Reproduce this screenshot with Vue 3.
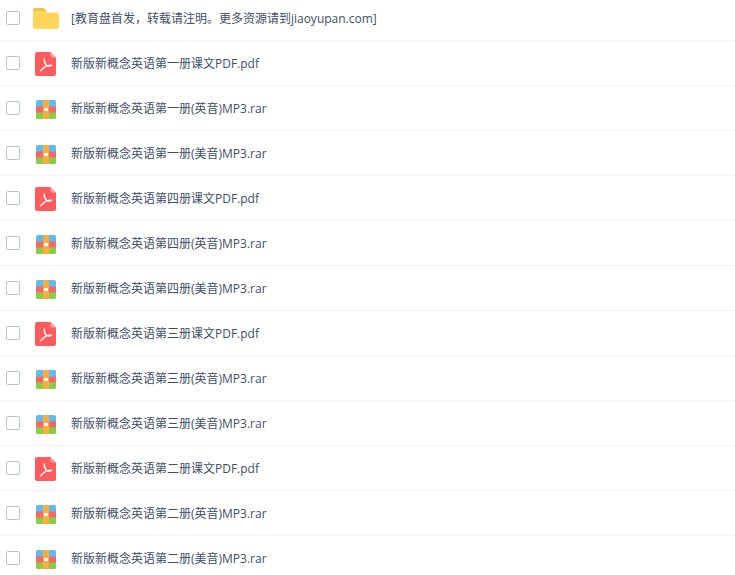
<template>
    <div class="page">
        <div class="fileList">
            <div v-for="file in files" :key="file.name" class="fileRow">
                <span class="checkBox"></span>
                <span class="iconBox">
                    <svg v-if="file.type === 'folder'" width="26" height="22" viewBox="0 -1 26 22">
                        <path d="M0 2a2 2 0 0 1 2-2h7.500c1.300 0 2 .5 2.700 1.400L14 4H0z" fill="#f2c24f" />
                        <path d="M0 5a2 2 0 0 1 2-2h10l1.500 1.500H24a2 2 0 0 1 2 2V19a2 2 0 0 1-2 2H2a2 2 0 0 1-2-2z" fill="#ffd659" />
                    </svg>
                    <svg v-else-if="file.type === 'pdf'" width="22" height="26" viewBox="0 -2 22 26">
                        <path d="M2 0h13.500L21 5.500V22a2 2 0 0 1-2 2H2a2 2 0 0 1-2-2V2a2 2 0 0 1 2-2z" fill="#fe5b5e" />
                        <path d="M15.500 0L21 5.500h-3.500a2 2 0 0 1-2-2z" fill="#ffa3a5" />
                        <path d="M9.300 7c-.3 2.500.6 4.800 2.500 6.600.8.700 2.700 1 5-.3-2.900-.6-6.200.6-8 2.400-1 1-2.300 2.100-3.100 3" fill="none" stroke="#fff" stroke-width="1.300" stroke-linecap="round" stroke-linejoin="round" />
                    </svg>
                    <svg v-else width="20" height="22" viewBox="0 -3 20 22">
                        <rect width="20" height="19" rx="2.500" fill="#fe6464" />
                        <path d="M2.500 0h15A2.500 2.500 0 0 1 20 2.500V6.500H0V2.500A2.500 2.500 0 0 1 2.500 0z" fill="#5abef5" />
                        <path d="M0 12.500h20v4a2.500 2.500 0 0 1-2.500 2.500h-15A2.500 2.500 0 0 1 0 16.500z" fill="#84cf45" />
                        <rect x="7" width="6" height="19" fill="#fbac3e" />
                        <rect x="7" y="6.500" width="6" height="6" fill="#fbac3e" />
                        <rect x="8" y="8" width="4" height="3" fill="#fff" />
                    </svg>
                </span>
                <span class="fileName">{{ file.name }}</span>
            </div>
        </div>
    </div>
</template>

<script setup>
const files = [
    { type: 'folder', name: '[教育盘首发，转载请注明。更多资源请到jiaoyupan.com]' },
    { type: 'pdf', name: '新版新概念英语第一册课文PDF.pdf' },
    { type: 'rar', name: '新版新概念英语第一册(英音)MP3.rar' },
    { type: 'rar', name: '新版新概念英语第一册(美音)MP3.rar' },
    { type: 'pdf', name: '新版新概念英语第四册课文PDF.pdf' },
    { type: 'rar', name: '新版新概念英语第四册(英音)MP3.rar' },
    { type: 'rar', name: '新版新概念英语第四册(美音)MP3.rar' },
    { type: 'pdf', name: '新版新概念英语第三册课文PDF.pdf' },
    { type: 'rar', name: '新版新概念英语第三册(英音)MP3.rar' },
    { type: 'rar', name: '新版新概念英语第三册(美音)MP3.rar' },
    { type: 'pdf', name: '新版新概念英语第二册课文PDF.pdf' },
    { type: 'rar', name: '新版新概念英语第二册(英音)MP3.rar' },
    { type: 'rar', name: '新版新概念英语第二册(美音)MP3.rar' },
]
</script>

<style>
html, body {
    margin: 0;
    background: #fff;
    overflow: hidden;
}
</style>

<style scoped>
.page {
    height: 575px;
    overflow: hidden;
    font-family: "Open Sans", "Noto Sans CJK SC", sans-serif;
}

.fileList {
    margin-top: -4px;
}

.fileRow {
    display: flex;
    align-items: center;
    height: 44px;
    padding-left: 6px;
    border-bottom: 1px solid #f2f5fa;
}

.checkBox {
    width: 12px;
    height: 12px;
    border: 1px solid #b9c5d6;
    border-radius: 2px;
    flex-shrink: 0;
}

.iconBox {
    display: flex;
    justify-content: center;
    width: 26px;
    margin-left: 13px;
    flex-shrink: 0;
}

.fileName {
    margin-left: 12px;
    font-size: 12px;
    color: #424e67;
}
</style>
